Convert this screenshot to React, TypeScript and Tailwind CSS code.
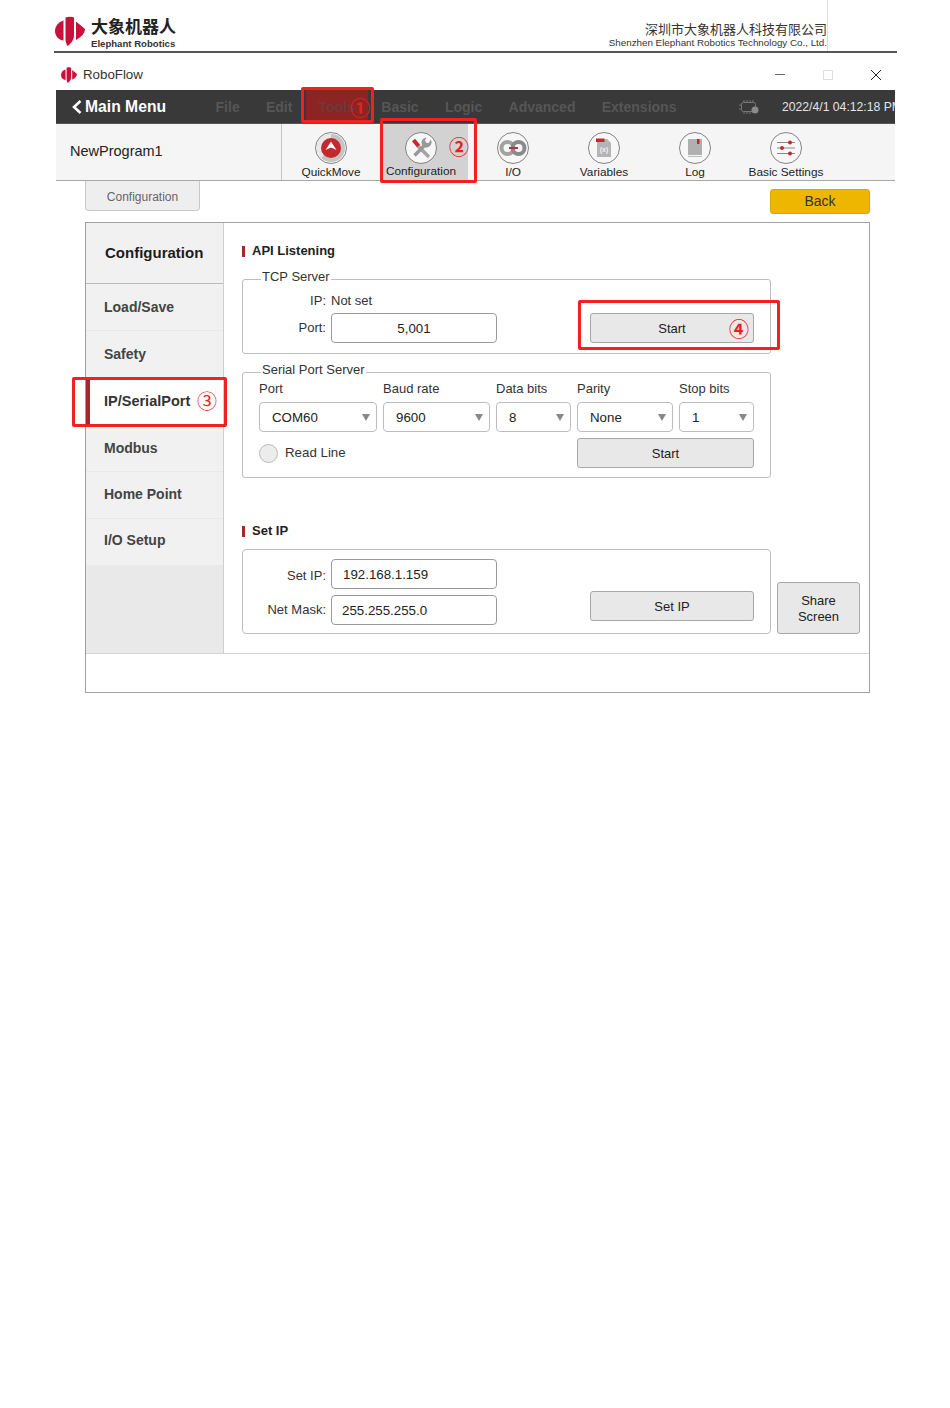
import type { ReactNode } from "react";

const FONT = "font-['Liberation_Sans',Arial,sans-serif]";
const CJK = "font-['Noto_Sans_CJK_SC','Liberation_Sans',sans-serif]";

function Logo({ className }: { className: string }) {
  return (
    <svg viewBox="0 0 30 30" className={className} fill="#c8103a">
      <path d="M8.5 4.500C3.500 6 0 10 0 15s3.500 9 8.500 9.500z" />
      <path d="M10.500 1.500C14 .2 17 .5 19 1.500v18C19 24 15.500 28 12.500 30c-1.200-2-2-4.500-2-7z" />
      <path d="M21 5.500L30 13c-.2 4-3.500 8-9 11z" />
    </svg>
  );
}

function ToolIcon({ children }: { children: ReactNode }) {
  return (
    <svg viewBox="0 0 32 32" className="h-[32px] w-[32px]">
      <circle cx="16" cy="16" r="15.500" fill="#f7f7f7" stroke="#666" strokeWidth="0.8" />
      {children}
    </svg>
  );
}

function Tool({ label, width, icon, active }: { label: string; width: string; icon: ReactNode; active?: boolean }) {
  return (
    <div className={`flex flex-col items-center pt-[8px] ${width} ${active ? "bg-[#d2d2d2] pr-[8px]" : ""}`}>
      {icon}
      <span className={`whitespace-nowrap text-[11.800px] leading-[14px] text-[#222] ${active ? "mt-[0px]" : "mt-[1px]"}`}>{label}</span>
    </div>
  );
}

function Field({ legend, children }: { legend: string; children: ReactNode }) {
  return (
    <fieldset className="w-[529px] rounded-[3px] border border-[#bdbdbd] px-[16px] pb-[8px]">
      <legend className="ml-[2px] px-[1px] pb-[4px] text-[13px] leading-[16px] text-[#333]">{legend}</legend>
      {children}
    </fieldset>
  );
}

function Title({ children }: { children: ReactNode }) {
  return (
    <div className="flex h-[16px] items-center gap-[7px] text-[13px] font-bold text-[#222]">
      <span className="h-[11px] w-[3px] bg-[#a8252c]" />
      {children}
    </div>
  );
}

function Btn({ className, children }: { className: string; children: ReactNode }) {
  return (
    <div className={`flex items-center justify-center rounded-[3px] border border-[#a8a8a8] bg-[#e8e8e8] pt-[1px] text-[13px] text-[#222] ${className}`}>
      {children}
    </div>
  );
}

function Input({ value, className }: { value: string; className: string }) {
  return (
    <div className={`flex h-[30px] w-[166px] items-center rounded-[4px] border border-[#9a9a9a] bg-white pt-[1px] text-[13.300px] text-[#222] ${className}`}>
      {value}
    </div>
  );
}

function Select({ label, value }: { label: string; value: string }) {
  return (
    <div className="flex flex-col">
      <span className="h-[14px] text-[13px] leading-[14px] text-[#333]">{label}</span>
      <div className="mt-[6px] flex h-[30px] items-center justify-between rounded-[4px] border border-[#bdbdbd] bg-white pl-[12px] pr-[6px] pt-[1px] text-[13.300px] text-[#222]">
        {value}
        <svg viewBox="0 0 8 7" className="h-[7px] w-[8px]" fill="#888">
          <path d="M0 0h8L4 7z" />
        </svg>
      </div>
    </div>
  );
}

function Mark({ className, glyph, glyphClass }: { className: string; glyph: string; glyphClass: string }) {
  return (
    <>
      <div className={`absolute rounded-[2px] border-[3px] border-[#f2201e] ${className}`} />
      <span className={`absolute ${CJK} text-[#e8201e] ${glyphClass}`}>{glyph}</span>
    </>
  );
}

const sideItems = [
  { name: "Load/Save", cls: "" },
  { name: "Safety", cls: "" },
  { name: "IP/SerialPort", cls: "" },
  { name: "Modbus", cls: "" },
  { name: "Home Point", cls: "pb-[2px]" },
  { name: "I/O Setup", cls: "pb-[4px]" },
];
const menu = ["File", "Edit", "Tools", "Basic", "Logic", "Advanced", "Extensions"];

export default function App() {
  return (
    <div className={`relative h-[1408px] w-[950px] overflow-hidden bg-white ${FONT}`}>
      {/* document letterhead */}
      <header className="ml-[54px] flex h-[53px] w-[843px] items-end justify-between border-b-2 border-[#555]">
        <div className="flex items-start gap-[6px] pb-[1px] pl-[1px]">
          <Logo className="h-[30px] w-[30px]" />
          <div className="flex flex-col">
            <span className={`${CJK} text-[17px] font-bold leading-[20px] text-[#222]`}>大象机器人</span>
            <span className="mt-[2px] text-[9.600px] font-bold leading-[12px] text-[#333]">Elephant Robotics</span>
          </div>
        </div>
        <div className="mr-[69px] flex flex-col items-end self-stretch border-r border-[#ddd] pt-[21px]">
          <span className={`${CJK} text-[13px] leading-[15px] text-[#333]`}>深圳市大象机器人科技有限公司</span>
          <span className="mt-[1px] text-[9.800px] leading-[12px] text-[#333]">Shenzhen Elephant Robotics Technology Co., Ltd.</span>
        </div>
      </header>

      <div className="ml-[56px] w-[839px]">
        {/* title bar */}
        <div className="flex h-[37px] items-center justify-between pl-[5px] pr-[14px] pt-[6px]">
          <div className="flex items-center gap-[6px]">
            <Logo className="h-[16px] w-[16px]" />
            <span className="text-[13.300px] text-[#333]">RoboFlow</span>
          </div>
          <div className="flex items-center gap-[38px]">
            <svg viewBox="0 0 10 10" className="h-[10px] w-[10px]" stroke="#666">
              <path d="M0 4.500h10" />
            </svg>
            <svg viewBox="0 0 10 10" className="h-[10px] w-[10px]" stroke="#ddd" fill="none">
              <path d="M.5.5h9v9h-9z" />
            </svg>
            <svg viewBox="0 0 10 10" className="h-[10px] w-[10px]" stroke="#222" fill="none">
              <path d="M0 0l10 10M10 0L0 10" />
            </svg>
          </div>
        </div>

        {/* main menu */}
        <div className="flex h-[34px] items-center border-b border-[#555] bg-[#393939]">
          <svg viewBox="0 0 10 14" className="ml-[16px] mt-[1px] h-[14px] w-[10px]" fill="none" stroke="#fff" strokeWidth="2.600">
            <path d="M8.500 1L2 7l6.500 6" />
          </svg>
          <span className="ml-[3px] mt-[1px] text-[15.700px] font-bold text-white">Main Menu</span>
          <nav className="ml-[36.350px] flex h-full">
            {menu.map((m) => (
              <span
                key={m}
                className={`flex items-center px-[13.150px] pt-[1px] text-[14px] font-bold ${m === "Tools" ? "bg-[#8c2424] text-[#6d3a3a]" : "text-[#565656]"}`}
              >
                {m}
              </span>
            ))}
          </nav>
          <div className="ml-auto flex w-[157px] shrink-0 items-center gap-[22px] overflow-hidden whitespace-nowrap pt-[1px]">
            <svg viewBox="0 0 22 18" className="h-[18px] w-[22px] shrink-0" fill="none" stroke="#777">
              <rect x="3.500" y="4.500" width="14" height="9" rx="2" />
              <path d="M6 2v2M9 2v2M12 2v2M15 2v2M6 14v2M9 14v2M12 14v2M1 7h2M1 11h2" />
              <circle cx="17" cy="12" r="3.500" fill="#8a8a8a" stroke="none" />
            </svg>
            <span className="text-[12.200px] text-[#e4e4e4]">2022/4/1 04:12:18 PM</span>
          </div>
        </div>

        {/* tool ribbon */}
        <div className="flex h-[57px] border-b border-[#a8a8a8] bg-[#f5f5f5]">
          <div className="flex w-[226px] items-center border-r border-[#c4c4c4] pb-[1px] pl-[14px] text-[14.500px] text-[#222]">NewProgram1</div>
          <Tool
            label="QuickMove"
            width="w-[98px]"
            icon={
              <ToolIcon>
                <circle cx="16" cy="16" r="14" fill="#c4c4c4" />
                <path d="M16 2a14 14 0 0 0-9.900 23.900L16 16z" fill="#e9e9e9" />
                <circle cx="16" cy="16" r="10" fill="#c4272d" />
                <path d="M16 9.500l5.500 8.500-5.500-2.500-5.500 2.500z" fill="#fff" />
              </ToolIcon>
            }
          />
          <div className="w-[2px]" />
          <Tool
            active
            label="Configuration"
            width="w-[86px]"
            icon={
              <ToolIcon>
                <path d="M13 14l11 11" stroke="#a6a6a6" strokeWidth="3.600" />
                <path d="M8.500 8l5 6" stroke="#c4272d" strokeWidth="4" />
                <path d="M21 12L9.500 23.500" stroke="#999" strokeWidth="3.600" />
                <path d="M25.500 7.500a5 5 0 1 1-4-2l-1.500 3 1.500 2.500 2.500-.3z" fill="#999" />
              </ToolIcon>
            }
          />
          <Tool
            label="I/O"
            width="w-[90px]"
            icon={
              <ToolIcon>
                <circle cx="10.500" cy="16" r="6" fill="none" stroke="#a2a2a2" strokeWidth="4" />
                <circle cx="21.500" cy="16" r="6" fill="none" stroke="#8a8a8a" strokeWidth="4" />
                <path d="M12 16h9" stroke="#b4323a" strokeWidth="2" />
              </ToolIcon>
            }
          />
          <Tool
            label="Variables"
            width="w-[92px]"
            icon={
              <ToolIcon>
                <path d="M9 7h10l4 4v14H9z" fill="#b4b4b4" />
                <path d="M8 6.500h8.500v3.500H8z" fill="#c4272d" />
                <text x="16" y="20" fontSize="7" fontWeight="700" textAnchor="middle" fill="#f2f2f2">(x)</text>
              </ToolIcon>
            }
          />
          <Tool
            label="Log"
            width="w-[90px]"
            icon={
              <ToolIcon>
                <path d="M9 7h14v16H9z" fill="#b0b0b0" />
                <path d="M9 24.500h14" stroke="#bbb" />
                <path d="M18 7h2.500v5H18z" fill="#c4272d" />
              </ToolIcon>
            }
          />
          <Tool
            label="Basic Settings"
            width="w-[92px]"
            icon={
              <ToolIcon>
                <path d="M7 10.500h18M7 16h18M7 21.500h18" stroke="#888" strokeWidth="1" />
                <circle cx="20" cy="10.500" r="2" fill="#c4272d" />
                <circle cx="12" cy="16" r="2" fill="#c4272d" />
                <circle cx="20" cy="21.500" r="2" fill="#c4272d" />
              </ToolIcon>
            }
          />
        </div>

        {/* tab row */}
        <div className="flex h-[41px] items-start justify-between pl-[29px] pr-[25px]">
          <div className="flex h-[30px] w-[115px] items-center justify-center rounded-b-[4px] border border-t-0 border-[#c8c8c8] bg-[#eeeeee] pt-[3px] text-[12px] text-[#666]">
            Configuration
          </div>
          <div className="mt-[8px] flex h-[25px] w-[100px] items-center justify-center rounded-[3px] border border-[#d8a800] bg-[#efb600] text-[14px] text-[#333]">
            Back
          </div>
        </div>

        {/* panel */}
        <div className="ml-[29px] h-[471px] w-[785px] border border-[#a0a0a0]">
          <div className="flex h-[431px] border-b border-[#d4d4d4]">
            <aside className="flex w-[138px] shrink-0 flex-col border-r border-[#cfcfcf] bg-[#e9e9e9]">
              <div className="flex h-[61px] shrink-0 items-center border-b border-[#bbb] bg-[#f1f1f1] pl-[19px] text-[15px] font-bold text-[#1c1c1c]">
                Configuration
              </div>
              {sideItems.map((s) =>
                s.name === "IP/SerialPort" ? (
                  <div key={s.name} className="flex h-[47px] items-center border-l-4 border-[#a8252c] bg-white pl-[14px] text-[14.500px] font-bold text-[#333]">
                    {s.name}
                  </div>
                ) : (
                  <div key={s.name} className={`flex h-[47px] items-center border-b border-[#e9e9e9] bg-[#f1f1f1] pl-[18px] text-[14px] font-bold text-[#444] ${s.cls}`}>
                    {s.name}
                  </div>
                ),
              )}
            </aside>

            <main className="pl-[18px] pt-[20px]">
              <Title>API Listening</Title>
              <div className="mt-[10px]">
                <Field legend="TCP Server">
                  <div className="pt-[4px]">
                    <div className="flex h-[16px] items-center text-[13px] text-[#333]">
                      <span className="w-[67px] text-right">IP:</span>
                      <span className="ml-[5px]">Not set</span>
                    </div>
                    <div className="mt-[4px] flex items-center pb-[2px]">
                      <span className="w-[67px] text-right text-[13px] text-[#333]">Port:</span>
                      <Input value="5,001" className="ml-[5px] justify-center" />
                      <Btn className="ml-[93px] h-[30px] w-[164px]">Start</Btn>
                    </div>
                  </div>
                </Field>
              </div>
              <div className="mt-[8px]">
                <Field legend="Serial Port Server">
                  <div className="grid grid-cols-[118px_107px_75px_96px_75px] gap-x-[6px]">
                    <Select label="Port" value="COM60" />
                    <Select label="Baud rate" value="9600" />
                    <Select label="Data bits" value="8" />
                    <Select label="Parity" value="None" />
                    <Select label="Stop bits" value="1" />
                  </div>
                  <div className="mb-[1px] mt-[6px] flex items-center justify-between">
                    <div className="flex items-center gap-[7px] text-[13.300px] text-[#333]">
                      <span className="h-[19px] w-[19px] rounded-full border border-[#bbb] bg-[#ececec]" />
                      Read Line
                    </div>
                    <Btn className="h-[30px] w-[177px]">Start</Btn>
                  </div>
                </Field>
              </div>

              <div className="mt-[45px]">
                <Title>Set IP</Title>
              </div>
              <div className="mt-[10px] flex items-end gap-[6px]">
                <div className="flex h-[85px] w-[529px] items-end rounded-[4px] border border-[#bdbdbd] pb-[8px]">
                  <div className="flex flex-col gap-[6px]">
                    <div className="flex items-center">
                      <span className="w-[83px] pt-[4px] text-right text-[13px] text-[#333]">Set IP:</span>
                      <Input value="192.168.1.159" className="ml-[5px] pl-[11px]" />
                    </div>
                    <div className="flex items-center">
                      <span className="w-[83px] text-right text-[13px] text-[#333]">Net Mask:</span>
                      <Input value="255.255.255.0" className="ml-[5px] pl-[10px]" />
                    </div>
                  </div>
                  <Btn className="mb-[4px] ml-[93px] h-[30px] w-[164px]">Set IP</Btn>
                </div>
                <Btn className="h-[52px] w-[83px] text-center leading-[16px]">
                  Share
                  <br />
                  Screen
                </Btn>
              </div>
            </main>
          </div>
        </div>
      </div>

      {/* red annotations painted over the screenshot */}
      <Mark className="left-[301px] top-[87px] h-[36px] w-[73px]" glyph="①" glyphClass="left-[350px] top-[93px] text-[20px] font-bold leading-[30px]" />
      <Mark className="left-[380px] top-[118px] h-[65px] w-[97px]" glyph="②" glyphClass="left-[449px] top-[132px] text-[20px] font-bold leading-[30px]" />
      <Mark className="left-[72px] top-[377px] h-[50px] w-[155px]" glyph="③" glyphClass="left-[197px] top-[386px] text-[20px] leading-[30px]" />
      <Mark className="left-[578px] top-[300px] h-[50px] w-[202px]" glyph="④" glyphClass="left-[729px] top-[314px] text-[20px] font-bold leading-[30px]" />
    </div>
  );
}
